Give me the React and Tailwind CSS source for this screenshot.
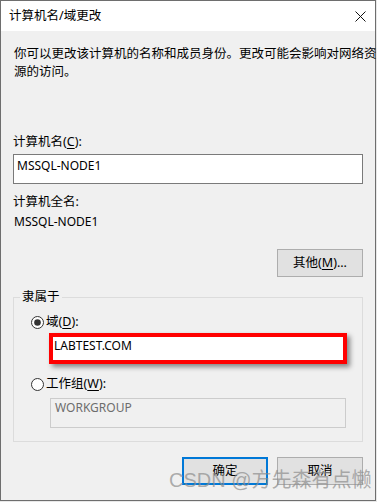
import React from "react";

const font = { fontFamily: '"Noto Sans", "Noto Sans CJK SC", sans-serif' };

function Radio({ checked }) {
  return (
    <svg width="13" height="13" viewBox="0 0 13 13" className="shrink-0">
      <circle cx="6.5" cy="6.5" r="6" fill="#ffffff" stroke="#333333" strokeWidth="1" />
      {checked && <circle cx="6.5" cy="6.5" r="3.3" fill="#333333" />}
    </svg>
  );
}

export default function App() {
  return (
    <div className="w-[377px] h-[502px] bg-[#e8e8e8] relative overflow-hidden text-black" style={font}>
      <div className="w-[376px] h-[501px] border border-[#6e6e6e] bg-[#f0f0f0] flex flex-col">
        {/* title bar */}
        <div className="h-[30px] bg-white flex items-center justify-between pl-[8px] pr-[9px] shrink-0">
          <span className="text-[12.5px] leading-[18px] whitespace-nowrap">计算机名/域更改</span>
          <svg width="11" height="11" viewBox="0 0 11 11">
            <path d="M0.5 0.5 L10.5 10.5 M10.5 0.5 L0.5 10.5" stroke="#111" strokeWidth="1" fill="none" />
          </svg>
        </div>

        {/* body */}
        <div className="flex flex-col px-[12px] pt-[14px]">
          <div className="text-[12.5px] leading-[18px] whitespace-nowrap pl-[1px]">
            你可以更改该计算机的名称和成员身份。更改可能会影响对网络资
            <br />
            源的访问。
          </div>

          <div className="mt-[52px] text-[12.5px] leading-[18px] whitespace-nowrap">
            计算机名(<span className="underline underline-offset-2">C</span>):
          </div>
          <div className="mt-[3px] h-[30px] border border-[#7a7a7a] bg-white pl-[3px] pt-[2px] text-[12px] leading-[18px]">
            MSSQL-NODE1
          </div>

          <div className="mt-[9px] text-[12.5px] leading-[18px] whitespace-nowrap">计算机全名:</div>
          <div className="mt-[2px] text-[12px] leading-[18px] pl-[1px]">MSSQL-NODE1</div>

          <div className="mt-[18px] self-end w-[86px] h-[28px] border border-[#adadad] bg-[#e1e1e1] flex items-center justify-center text-[12.5px] leading-[18px] whitespace-nowrap">
            其他(<span className="underline underline-offset-2">M</span>)...
          </div>

          {/* group box */}
          <div className="mt-[20px] relative border border-[#dcdcdc] h-[145px] flex flex-col">
            <span className="absolute -top-[10px] left-[6px] bg-[#f0f0f0] px-[2px] text-[12.5px] leading-[18px] whitespace-nowrap">
              隶属于
            </span>
            <div className="mt-[15px] pl-[17px] flex items-center gap-[2px] h-[18px]">
              <Radio checked />
              <span className="text-[12.5px] leading-[18px] whitespace-nowrap">
                域(<span className="underline underline-offset-2">D</span>):
              </span>
            </div>
            <div className="mt-[2px] ml-[35px] w-[298px] h-[31px] border-4 border-[#ff0000] bg-white shadow-[3px_3px_5px_rgba(0,0,0,0.45)] pl-[1px] text-[12px] leading-[18px]">
              LABTEST.COM
            </div>
            <div className="mt-[11px] pl-[17px] flex items-center gap-[2px] h-[18px]">
              <Radio />
              <span className="text-[12.5px] leading-[18px] whitespace-nowrap">
                工作组(<span className="underline underline-offset-2">W</span>):
              </span>
            </div>
            <div className="mt-[5px] ml-[36px] w-[296px] h-[30px] border border-[#cccccc] bg-[#f0f0f0] pl-[4px] text-[12px] leading-[18px] text-[#6d6d6d]">
              WORKGROUP
            </div>
          </div>

          {/* buttons */}
          <div className="mt-[15px] flex justify-end gap-[9px]">
            <div className="w-[86px] h-[28px] border-2 border-[#0078d7] bg-[#e1e1e1] flex items-center justify-center text-[12.5px] leading-[18px]">
              确定
            </div>
            <div className="w-[86px] h-[28px] border border-[#adadad] bg-[#e1e1e1] flex items-center justify-center text-[12.5px] leading-[18px]">
              取消
            </div>
          </div>
        </div>
      </div>

      {/* watermark */}
      <div
        className="absolute left-[169px] top-[467px] text-[20px] leading-[26px] whitespace-nowrap text-[#8c8c8c]/70"
        style={{ fontFamily: '"Liberation Sans", "Noto Sans CJK SC", sans-serif' }}
      >
        CSDN @方先森有点懒
      </div>
    </div>
  );
}
